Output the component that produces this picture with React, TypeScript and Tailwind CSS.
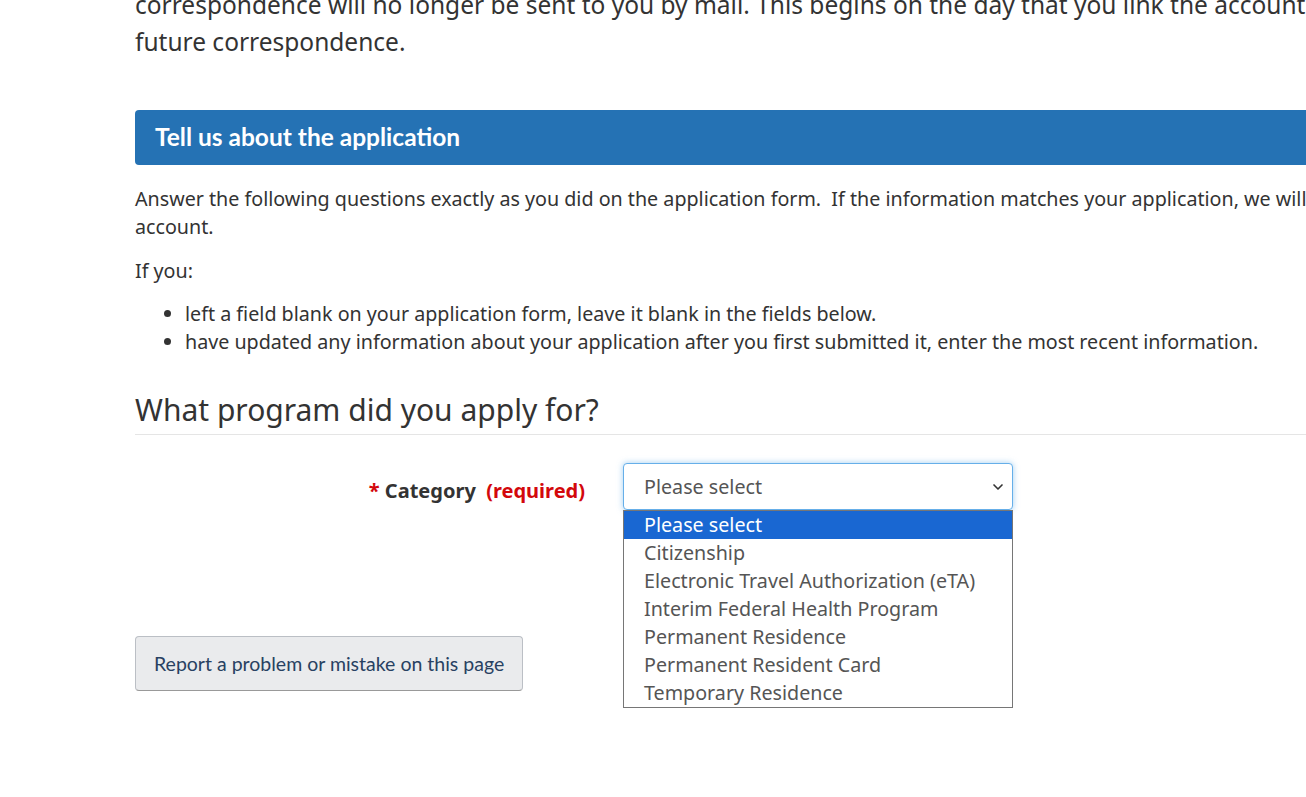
import { ChevronDown } from "lucide-react";

const options = [
  "Please select",
  "Citizenship",
  "Electronic Travel Authorization (eTA)",
  "Interim Federal Health Program",
  "Permanent Residence",
  "Permanent Resident Card",
  "Temporary Residence",
];

export default function App() {
  return (
    <main className="h-[797px] w-[1306px] overflow-hidden bg-white text-[#333] font-['Noto_Sans',sans-serif]">
      <div className="ml-[135px] w-[1400px]">
        {/* intro text, scrolled partly off the top */}
        <p className="-mt-[14px] whitespace-nowrap text-[24.5px] leading-[37px]">
          correspondence will no longer be sent to you by mail. This begins on the day that you link the account to your profile
          <br />
          future correspondence.
        </p>

        {/* section header */}
        <div className="mt-[50px] flex h-[55px] items-center rounded-l-[4px] bg-[#2572b4] px-5">
          <h2 className="font-['Lato',sans-serif] text-[24.5px] font-bold text-white">Tell us about the application</h2>
        </div>

        <p className="mt-[20px] whitespace-nowrap text-[19.7px] leading-[28px]">
          Answer the following questions exactly as you did on the application form.&nbsp; If the information matches your application, we will link it to your
          <br />
          account.
        </p>
        <p className="mt-[16px] text-[19.7px] leading-[28px]">If you:</p>
        <ul className="mt-[15px] list-disc pl-[50px] text-[19.7px] leading-[28px]">
          <li>left a field blank on your application form, leave it blank in the fields below.</li>
          <li>have updated any information about your application after you first submitted it, enter the most recent information.</li>
        </ul>

        <h3 className="mt-[34px] border-b border-[#e5e5e5] pb-[4px] text-[30px] leading-[40px] font-normal">
          What program did you apply for?
        </h3>

        {/* form row */}
        <div className="mt-[28px] flex items-start">
          <label className="w-[488px] pr-[38px] pt-[14px] text-right text-[20px] font-bold leading-[28px]">
            <span className="text-[#d3080c]">*</span> Category&nbsp; <span className="text-[#d3080c]">(required)</span>
          </label>
          <div className="relative">
            <div className="flex h-[47px] w-[390px] items-center justify-between rounded-[4px] border border-[#66afe9] bg-white pl-[20px] pr-[6px] text-[19.7px] text-[#555] shadow-[0_0_6px_rgba(102,175,233,0.6)]">
              <span>Please select</span>
              <ChevronDown className="h-4 w-4 text-[#333]" strokeWidth={2.5} />
            </div>
            <div className="absolute left-0 top-[47px] w-[390px] border border-[#767676] bg-white text-[19.7px] leading-[28px] text-[#555]">
              {options.map((o, i) => (
                <div key={o} className={i === 0 ? "bg-[#1967d2] pl-[20px] text-white" : "pl-[20px]"}>
                  {o}
                </div>
              ))}
            </div>
          </div>
        </div>

        <button className="mt-[126px] h-[55px] rounded-[4px] border border-[#bbbfc5] border-b-[#999] bg-[#eaebed] px-[18px] font-['Lato',sans-serif] text-[19.5px] text-[#284162]">
          Report a problem or mistake on this page
        </button>
      </div>
    </main>
  );
}
